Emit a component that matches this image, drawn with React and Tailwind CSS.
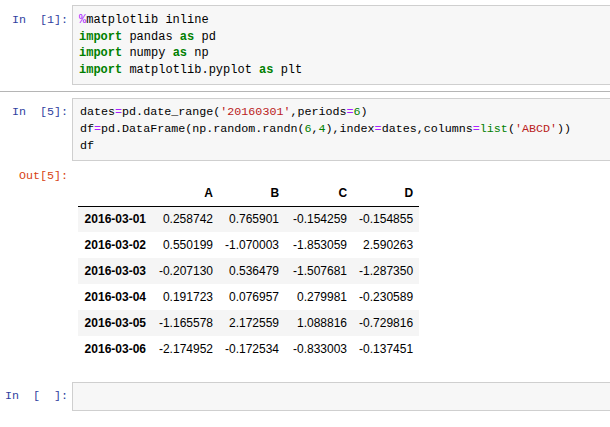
const mono = { fontFamily: '"Liberation Mono", "DejaVu Sans Mono", monospace' };

function Prompt({ children, out, className = "" }) {
  return (
    <div
      className={`w-[72px] shrink-0 pr-[4px] text-right whitespace-pre text-[11.7px] ${out ? "text-[#d84315]" : "text-[#303f9f]"} ${className}`}
      style={mono}
    >
      {children}
    </div>
  );
}

const P = ({ children }) => <span className="text-[#aa22ff]">{children}</span>;
const K = ({ children }) => <span className="text-[#008000] font-bold">{children}</span>;
const G = ({ children }) => <span className="text-[#008000]">{children}</span>;
const R = ({ children }) => <span className="text-[#ba2121]">{children}</span>;

const rows = [
  ["2016-03-01", "0.258742", "0.765901", "-0.154259", "-0.154855"],
  ["2016-03-02", "0.550199", "-1.070003", "-1.853059", "2.590263"],
  ["2016-03-03", "-0.207130", "0.536479", "-1.507681", "-1.287350"],
  ["2016-03-04", "0.191723", "0.076957", "0.279981", "-0.230589"],
  ["2016-03-05", "-1.165578", "2.172559", "1.088816", "-0.729816"],
  ["2016-03-06", "-2.174952", "-0.172534", "-0.833003", "-0.137451"],
];

export default function App() {
  return (
    <div className="w-[610px] h-[427px] overflow-hidden bg-white text-black">
      <div className="w-[622px]">
        {/* Cell 1 */}
        <div className="flex pt-[5px] pb-[6px]">
          <Prompt className="pt-[7px] leading-[16.5px]">{"In\u00a0\u00a0[1]:"}</Prompt>
          <div
            className="flex-1 h-[80px] border border-[#cfcfcf] bg-[#f7f7f7] px-[6px] py-[6px] text-[12px] leading-[16.5px] whitespace-pre"
            style={mono}
          >
            <div><P>%</P>matplotlib inline</div>
            <div><K>import</K> pandas <K>as</K> pd</div>
            <div><K>import</K> numpy <K>as</K> np</div>
            <div><K>import</K> matplotlib.pyplot <K>as</K> plt</div>
          </div>
        </div>

        {/* Cell 2 (selected) */}
        <div className="border-t border-[#b5b5b5]">
          <div className="flex pt-[6px]">
            <Prompt className="pt-[6px] leading-[17px]">{"In\u00a0\u00a0[5]:"}</Prompt>
            <div
              className="flex-1 h-[63px] border border-[#cfcfcf] bg-[#f7f7f7] px-[7px] py-[5px] text-[11.7px] leading-[17px] whitespace-pre"
              style={mono}
            >
              <div>dates<P>=</P>pd.date_range(<R>'20160301'</R>,periods<P>=</P><G>6</G>)</div>
              <div>df<P>=</P>pd.DataFrame(np.random.randn(<G>6</G>,<G>4</G>),index<P>=</P>dates,columns<P>=</P><G>list</G>(<R>'ABCD'</R>))</div>
              <div>df</div>
            </div>
          </div>

          {/* Output */}
          <div className="flex">
            <Prompt out className="pt-[7px] leading-[17px]">Out[5]:</Prompt>
            <div className="pt-[19px] pl-[6px]">
              <table
                className="table-fixed border-collapse text-[12px] leading-[14px]"
                style={{ fontFamily: '"Liberation Sans", Arial, sans-serif' }}
              >
                <colgroup>
                  <col className="w-[74px]" />
                  <col className="w-[67px]" />
                  <col className="w-[66px]" />
                  <col className="w-[68px]" />
                  <col className="w-[66px]" />
                </colgroup>
                <thead>
                  <tr className="h-[26px] border-b border-black">
                    <th className="px-[6px]"></th>
                    {["A", "B", "C", "D"].map((c) => (
                      <th key={c} className="px-[6px] text-right font-bold">{c}</th>
                    ))}
                  </tr>
                </thead>
                <tbody>
                  {rows.map((r, i) => (
                    <tr key={r[0]} className={`h-[26px] ${i % 2 === 0 ? "bg-[#f5f5f5]" : "bg-white"}`}>
                      <th className="px-[6px] text-right font-bold">{r[0]}</th>
                      {r.slice(1).map((v, j) => (
                        <td key={j} className="px-[6px] text-right">{v}</td>
                      ))}
                    </tr>
                  ))}
                </tbody>
              </table>
            </div>
          </div>
        </div>

        {/* Cell 3 */}
        <div className="flex pt-[20px]">
          <Prompt className="pt-[6px] leading-[17px]">{"In\u00a0\u00a0[\u00a0\u00a0]:"}</Prompt>
          <div className="flex-1 h-[29px] border border-[#cfcfcf] bg-[#f7f7f7]"></div>
        </div>
      </div>
    </div>
  );
}
